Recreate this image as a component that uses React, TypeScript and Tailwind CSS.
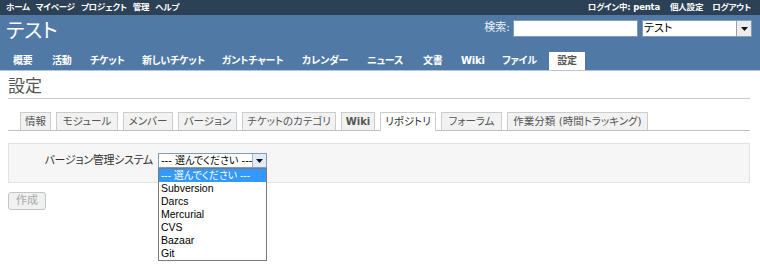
import React from "react";

function Arrow({ gray }: { gray?: boolean }) {
  return (
    <div
      className={
        "w-[15px] h-full flex items-center justify-center border-l " +
        (gray ? "border-[#a0a0a0] bg-[#ececec]" : "border-[#9fb3cf] bg-[#e3ebf6]")
      }
    >
      <svg width="7" height="4" viewBox="0 0 7 4">
        <path d="M0 0 L7 0 L3.5 4 Z" fill="#111" />
      </svg>
    </div>
  );
}

export default function App() {
  return (
    <div className="w-[760px] h-[274px] overflow-hidden bg-white font-['DejaVu_Sans','Noto_Sans_CJK_JP',sans-serif] [font-feature-settings:'palt'] text-[11px] text-[#333]">
      {/* top menu */}
      <div className="h-[15px] bg-[#2c4056] flex items-center justify-between text-white font-bold text-[8.5px] leading-none pl-[6px] pr-[9px] tracking-[-0.2px]">
        <div className="flex gap-[6px]">
          <span>ホーム</span>
          <span>マイページ</span>
          <span>プロジェクト</span>
          <span>管理</span>
          <span>ヘルプ</span>
        </div>
        <div className="flex">
          <span className="mr-[10px]">ログイン中: <span>penta</span></span>
          <span className="mr-[9px]">個人設定</span>
          <span>ログアウト</span>
        </div>
      </div>
      {/* header */}
      <div className="h-[55px] bg-[#507aa5] flex flex-col">
        <div className="h-[37px] flex items-start justify-between pl-[6px] pr-[8px]">
          <div className="text-white text-[20px] leading-[24px] mt-[4px]">テスト</div>
          <div className="flex items-center mt-[5px]">
            <span className="text-[#eef2f7] text-[11px] mr-[3px]">検索:</span>
            <div className="w-[125px] h-[17px] bg-white border border-[#7f9db9]" />
            <div className="ml-[4px] w-[110px] h-[17px] bg-white border border-[#7f9db9] flex">
              <span className="flex-1 text-[11px] leading-[15px] text-black pl-[1px]">テスト</span>
              <Arrow gray />
            </div>
          </div>
        </div>
        <div className="h-[18px] flex items-end pl-[5px] text-white font-bold text-[10px] tracking-[-0.2px] whitespace-nowrap">
          <span className="w-[39px] pl-[8px] leading-[18px]">概要</span>
          <span className="w-[38px] pl-[8px] leading-[18px]">活動</span>
          <span className="w-[52px] pl-[8px] leading-[18px]">チケット</span>
          <span className="w-[80px] pl-[8px] leading-[18px]">新しいチケット</span>
          <span className="w-[80px] pl-[8px] leading-[18px]">ガントチャート</span>
          <span className="w-[65px] pl-[8px] leading-[18px]">カレンダー</span>
          <span className="w-[56px] pl-[8px] leading-[18px]">ニュース</span>
          <span className="w-[38px] pl-[8px] leading-[18px]">文書</span>
          <span className="w-[41px] pl-[8px] leading-[18px]">Wiki</span>
          <span className="w-[55px] pl-[8px] leading-[18px]">ファイル</span>
          <span className="w-[36px] h-[18px] bg-white text-[#555] text-center leading-[18px]">設定</span>
        </div>
      </div>
      {/* content */}
      <div className="border-t border-[#b7c7da] pl-[8px] pr-[10px] pt-[5px]">
        <h2 className="h-[23px] border-b border-[#c8c8c8] text-[17px] leading-[20px] text-[#555]">設定</h2>
        <div className="mt-[13px] flex items-end gap-[5px] pl-[12px] border-b border-[#c0c0c0] text-[10.5px]">
          <div className="w-[31px] h-[18px] border border-b-0 border-[#ccc] bg-[#f2f2f2] text-[#555] flex items-center justify-center">情報</div>
          <div className="w-[62px] h-[18px] border border-b-0 border-[#ccc] bg-[#f2f2f2] text-[#555] flex items-center justify-center">モジュール</div>
          <div className="w-[50px] h-[18px] border border-b-0 border-[#ccc] bg-[#f2f2f2] text-[#555] flex items-center justify-center">メンバー</div>
          <div className="w-[59px] h-[18px] border border-b-0 border-[#ccc] bg-[#f2f2f2] text-[#555] flex items-center justify-center">バージョン</div>
          <div className="w-[94px] h-[18px] border border-b-0 border-[#ccc] bg-[#f2f2f2] text-[#555] flex items-center justify-center">チケットのカテゴリ</div>
          <div className="w-[34px] h-[18px] border border-b-0 border-[#ccc] bg-[#f2f2f2] text-[#555] font-bold text-[10px] flex items-center justify-center">Wiki</div>
          <div className="w-[56px] h-[19px] -mb-px border border-b-0 border-[#ccc] bg-white text-[#333] flex items-center justify-center pb-px">リポジトリ</div>
          <div className="w-[61px] h-[18px] border border-b-0 border-[#ccc] bg-[#f2f2f2] text-[#555] flex items-center justify-center">フォーラム</div>
          <div className="w-[141px] h-[18px] border border-b-0 border-[#ccc] bg-[#f2f2f2] text-[#555] flex items-center justify-center">作業分類 (時間トラッキング)</div>
        </div>
        <div className="mt-[12px] h-[40px] bg-[#f6f6f6] border border-[#e2e2e2] flex items-start pt-[9px]">
          <span className="w-[144px] text-right leading-[15px] text-[#333] tracking-[-0.3px]">バージョン管理システム</span>
          <div className="relative ml-[5px] w-[109px] h-[15px] bg-white border border-[#7f9db9] flex">
            <span className="flex-1 text-[10px] leading-[13px] text-black pl-[2px] whitespace-nowrap">--- 選んでください ---</span>
            <Arrow />
            <div className="absolute left-[-1px] top-[14px] w-[109px] bg-white border border-[#7a7a7a] font-['Liberation_Sans','Noto_Sans_CJK_JP',sans-serif] text-[10.5px] text-black">
              <div className="h-[13px] leading-[13px] bg-[#3399ff] text-white pl-[2px] text-[10px]">--- 選んでください ---</div>
              <div className="h-[13px] leading-[13px] pl-[2px]">Subversion</div>
              <div className="h-[13px] leading-[13px] pl-[2px]">Darcs</div>
              <div className="h-[13px] leading-[13px] pl-[2px]">Mercurial</div>
              <div className="h-[13px] leading-[13px] pl-[2px]">CVS</div>
              <div className="h-[13px] leading-[13px] pl-[2px]">Bazaar</div>
              <div className="h-[13px] leading-[13px] pl-[2px]">Git</div>
            </div>
          </div>
        </div>
        <div className="mt-[9px] w-[38px] h-[18px] border border-[#c4c4c4] rounded-[3px] bg-[#f0f0f0] text-[#a8a8a8] flex items-center justify-center">作成</div>
      </div>
    </div>
  );
}
